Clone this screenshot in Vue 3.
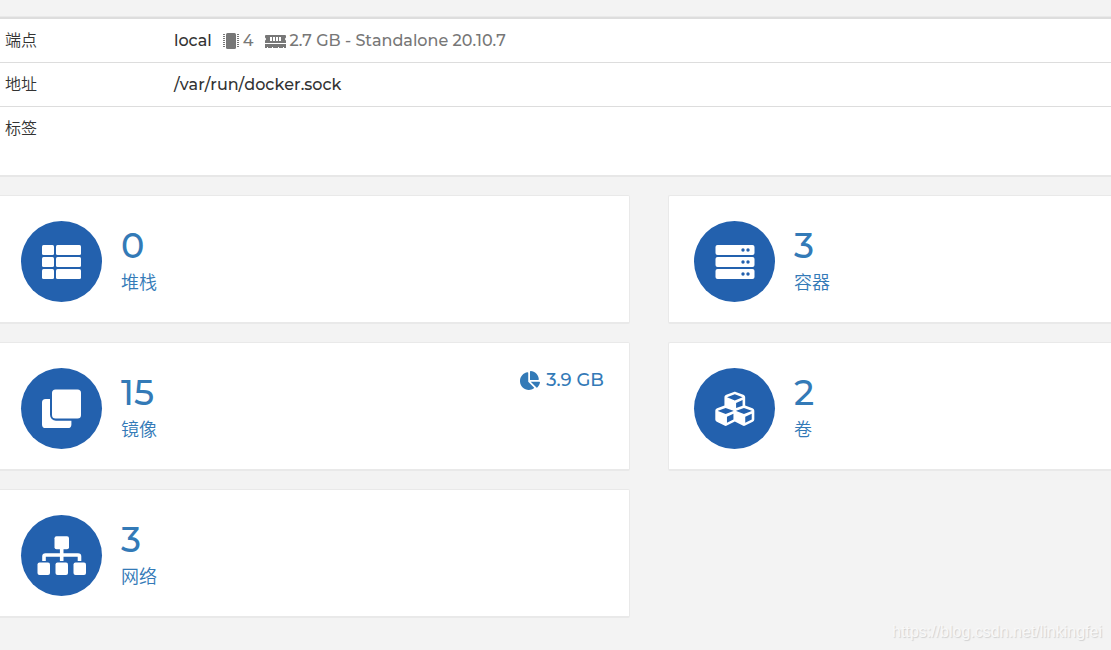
<script setup>
const cards = [
  { id: 'stacks', count: '0', label: '堆栈' },
  { id: 'containers', count: '3', label: '容器' },
  { id: 'images', count: '15', label: '镜像', size: '3.9 GB' },
  { id: 'volumes', count: '2', label: '卷' },
  { id: 'networks', count: '3', label: '网络' },
]
const rows = [24, 36, 48]
const pins = [1, 3, 5, 7, 9, 11, 13]
</script>

<template>
  <main class="page">
    <section class="endpoint">
      <table>
        <tbody>
          <tr>
            <th scope="row">端点</th>
            <td>
              <span class="line">
                <span>local</span>
                <span class="muted">
                  <svg class="chip" viewBox="0 0 16 16" aria-hidden="true">
                    <rect x="3" width="10" height="16" rx="1.5" />
                    <path v-for="y in pins" :key="y" :d="`M0 ${y}h2v1h-2zM14 ${y}h2v1h-2z`" />
                  </svg>
                  <span>4</span>
                </span>
                <span class="muted">
                  <svg class="ram" viewBox="0 0 21 13" aria-hidden="true">
                    <path fill-rule="evenodd" d="M1 0h19q1 0 1 1v1.500q-1 .5-1 1.500t1 1.500V8H0V5.500q1-.5 1-1.500t-1-1.500V1q0-1 1-1zM5 2v4h2V2zM8 2v4h2V2zM11 2v4h2V2zM14 2v4h2V2zM0 9h21v4h-2v-1h-1v1h-4v-1h-1v1H8v-1H7v1H3v-1H2v1H0z" />
                  </svg>
                  <span>2.7 GB - Standalone 20.10.7</span>
                </span>
              </span>
            </td>
          </tr>
          <tr>
            <th scope="row">地址</th>
            <td>/var/run/docker.sock</td>
          </tr>
          <tr>
            <th scope="row">标签</th>
            <td></td>
          </tr>
        </tbody>
      </table>
    </section>

    <nav class="cards">
      <a v-for="card in cards" :key="card.id" class="card" :href="`#${card.id}`">
        <span class="badge">
          <svg viewBox="0 0 81 81" aria-hidden="true">
            <template v-if="card.id === 'stacks'">
              <template v-for="y in rows" :key="y">
                <rect x="21" :y="y" width="12" height="10" rx="1.5" />
                <rect x="35" :y="y" width="25" height="10" rx="1.5" />
              </template>
            </template>
            <template v-else-if="card.id === 'containers'">
              <template v-for="y in rows" :key="y">
                <rect x="21.5" :y="y" width="39" height="10" rx="2" />
                <circle class="hole" cx="49" :cy="y + 5" r="1.7" />
                <circle class="hole" cx="54" :cy="y + 5" r="1.7" />
              </template>
            </template>
            <template v-else-if="card.id === 'images'">
              <rect x="31" y="21.5" width="29" height="29" rx="3.5" />
              <path d="M29 31h-4.4A3.6 3.6 0 0 0 21 34.6v21.8A3.6 3.6 0 0 0 24.6 60h22.2a3.6 3.6 0 0 0 3.6-3.6v-3.6H35A6 6 0 0 1 29 46.800z" />
            </template>
            <path
              v-else-if="card.id === 'volumes'"
              transform="translate(21.3 21.3) scale(.0762)"
              d="M488.6 250.2L392 214V105.500c0-15-9.300-28.400-23.400-33.700l-100-37.500c-8.100-3.100-17.100-3.100-25.300 0l-100 37.500c-14.100 5.300-23.400 18.700-23.400 33.700V214l-96.600 36.200C9.300 255.500 0 268.900 0 283.900V394c0 13.600 7.700 26.100 19.900 32.200l100 50c10.100 5.100 22.100 5.100 32.200 0l103.900-52 103.900 52c10.100 5.100 22.100 5.100 32.200 0l100-50c12.200-6.100 19.900-18.600 19.900-32.200V283.900c0-15-9.300-28.400-23.400-33.700zM358 214.800l-85 31.900v-68.200l85-37v73.300zM154 104.100l102-38.200 102 38.200v.6l-102 41.400-102-41.400v-.6zm84 291.100l-85 42.500v-79.100l85-38.800v75.400zm0-112l-102 41.400-102-41.400v-.6l102-38.200 102 38.200v.6zm240 112l-85 42.500v-79.100l85-38.800v75.400zm0-112l-102 41.400-102-41.400v-.6l102-38.200 102 38.200v.6z"
            />
            <template v-else>
              <rect x="33.500" y="21.300" width="14.500" height="13" rx="2" />
              <path class="wire" d="M40.700 33v13M23 46v-4.500q0-1.500 1.500-1.500h32.500q1.500 0 1.500 1.500V46" />
              <rect x="16.500" y="47.500" width="12.500" height="12.500" rx="2" />
              <rect x="34.500" y="47.500" width="12.500" height="12.500" rx="2" />
              <rect x="52.500" y="47.500" width="12.500" height="12.500" rx="2" />
            </template>
          </svg>
        </span>
        <span class="info">
          <span class="count">{{ card.count }}</span>
          <span class="label">{{ card.label }}</span>
        </span>
        <span v-if="card.size" class="size">
          <svg viewBox="0 0 544 512" aria-hidden="true">
            <path d="M527.79 288H290.5l158.03 158.03c6.04 6.04 15.98 6.53 22.19.68 38.7-36.46 65.32-85.61 73.13-140.86 1.34-9.46-6.51-17.85-16.06-17.85zm-15.83-64.8C503.72 103.74 408.26 8.28 288.8.04 279.68-.59 272 7.1 272 16.24V240h223.77c9.14 0 16.82-7.68 16.19-16.8zM224 288V50.71c0-9.55-8.39-17.4-17.84-16.06C86.99 51.49-4.1 155.6.14 280.37 4.5 408.51 114.83 513.59 243.03 511.98c50.4-.63 96.97-16.87 135.26-44.03 7.9-5.6 8.42-17.23 1.57-24.08L224 288z" />
          </svg>
          <span>{{ card.size }}</span>
        </span>
      </a>
    </nav>

    <span class="watermark">https://blog.csdn.net/linkingfei</span>
  </main>
</template>

<style>
body {
  margin: 0;
  background: #f3f3f3;
}
</style>

<style scoped>
.page {
  position: relative;
  box-sizing: border-box;
  min-height: 100vh;
  padding-top: 16px;
  background: #f3f3f3;
  color: #333;
  font-family: Montserrat, Inter, "Noto Sans CJK SC", sans-serif;
  font-size: 16px;
  font-weight: 500;
  font-kerning: none;
  line-height: 24px;
}
.endpoint {
  padding-bottom: 25px;
  background: #fff;
  border-top: 1px solid #e9e9e9;
  border-bottom: 2px solid #e7e7e7;
}
table {
  width: 100%;
  border-collapse: collapse;
  border-top: 2px solid #ddd;
}
tr + tr {
  border-top: 1px solid #ddd;
}
th,
td {
  height: 24px;
  padding: 10px 5px 9px;
  text-align: left;
}
th {
  width: 159px;
  font-weight: 350;
}
.line,
.muted {
  display: flex;
  align-items: center;
}
.line {
  gap: 11px;
}
.muted {
  gap: 4px;
  color: #777;
}
svg {
  display: block;
  fill: currentColor;
}
.chip {
  width: 16px;
  height: 16px;
}
.ram {
  width: 21px;
  height: 13px;
}
.cards {
  display: grid;
  grid-template-columns: 630fr 443fr;
  gap: 18px 38px;
  padding-top: 18px;
}
.card {
  display: flex;
  align-items: flex-start;
  gap: 19px;
  padding: 25px 25px 20px;
  background: #fff;
  border: 1px solid #e9e9e9;
  border-bottom-width: 2px;
  border-radius: 2px;
  color: #337ab7;
  text-decoration: none;
}
.card:nth-child(odd) {
  padding-left: 21px;
  border-left: 0;
  border-radius: 0 2px 2px 0;
}
.card:nth-child(even) {
  border-right: 0;
  border-radius: 2px 0 0 2px;
}
.badge {
  flex: none;
  width: 81px;
  height: 81px;
  border-radius: 50%;
  background: #2361ae;
  color: #fff;
}
.hole {
  fill: #2361ae;
}
.wire {
  fill: none;
  stroke: currentColor;
  stroke-width: 3.6;
}
.info {
  display: flex;
  flex-direction: column;
  padding-top: 5px;
}
.count {
  font-size: 35px;
  line-height: 40px;
}
.label {
  font-size: 18px;
  font-weight: 350;
  line-height: 34px;
}
.size {
  display: flex;
  align-items: center;
  gap: 6px;
  margin-left: auto;
  font-size: 18px;
}
.size svg {
  width: 20px;
  height: 19px;
}
.watermark {
  position: absolute;
  right: 9px;
  bottom: 6px;
  color: #f8f8f8;
  font-family: "Liberation Sans", sans-serif;
  font-size: 16px;
  font-weight: 400;
  text-shadow: 1px 1px 1px #d0d0d0;
}
</style>
